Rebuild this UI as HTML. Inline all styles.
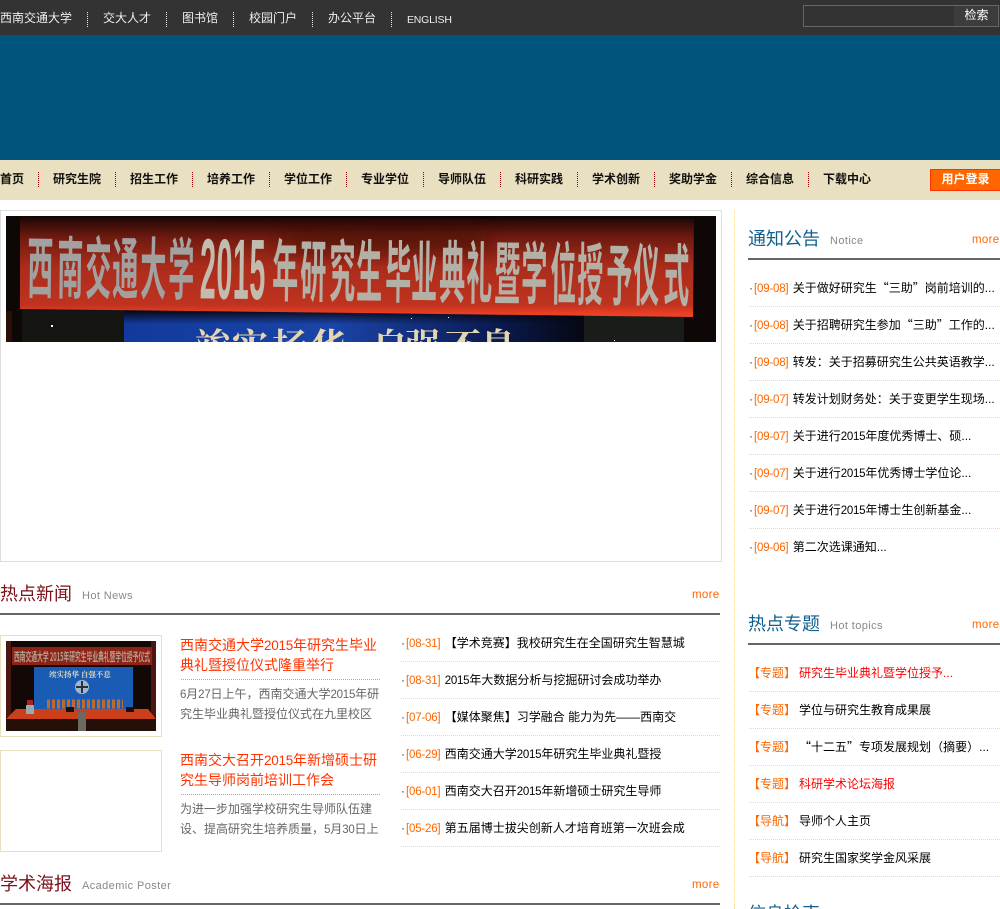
<!DOCTYPE html>
<html lang="zh"><head><meta charset="utf-8"><title>西南交通大学研究生院</title>
<style>
html,body{margin:0;padding:0;background:#fff}
#p{position:relative;width:1000px;height:909px;overflow:hidden;font:12px/18px "Liberation Sans","Noto Sans CJK SC",sans-serif;color:#000}
#p div{position:absolute;white-space:nowrap}
.t{color:#eee;top:9px}
.s{top:12px;height:15px;width:0;border-left:1px dotted #eee}
.n{top:170px;font-weight:bold;color:#111}
.m{top:172px;height:15px;width:0;border-left:1px dotted #900}
.h1{font-size:18px;line-height:24px}
.en{font-size:11px;color:#888;letter-spacing:.4px;line-height:16px}
.more{font-size:11.5px;color:#f60;letter-spacing:.3px}
.rule{height:2px;background:#666}
.d{height:0;border-top:1px dotted #e6dcb4}
.dg{height:0;border-top:1px dotted #aaa}
b{font-weight:normal;color:#f60;font-size:11.5px;letter-spacing:-.2px;margin-right:1px}
i{font-style:normal;display:inline-block;width:5px;color:#333}
em{font-style:normal;font-size:11.5px;letter-spacing:-.25px}
.ot em{font-size:13.5px}
.c{font-family:"Noto Sans CJK TC",sans-serif}
.q{font-family:"Noto Sans CJK SC",sans-serif}
.r{color:#f00}
.o{color:#f60}
.ot{font-size:14px;line-height:20px;color:#f30}
.gt{line-height:20px;color:#666;font-size:12px}
</style></head><body><div id="p">
<div style="left:0;top:0;width:1000px;height:35px;background:#333"></div>
<div style="left:0;top:35px;width:1000px;height:125px;background:#00557f"></div>
<div style="left:0;top:160px;width:1000px;height:40px;background:#e8e0c0"></div>

<div class="t" style="left:0">西南交通大学</div><div class="s" style="left:87px"></div>
<div class="t" style="left:103px">交大人才</div><div class="s" style="left:166px"></div>
<div class="t" style="left:182px">图书馆</div><div class="s" style="left:233px"></div>
<div class="t" style="left:249px">校园门户</div><div class="s" style="left:312px"></div>
<div class="t" style="left:328px">办公平台</div><div class="s" style="left:391px"></div>
<div class="t" style="left:407px;top:11px;font-size:10.5px;letter-spacing:-.2px">ENGLISH</div>

<div style="left:803px;top:5px;width:150px;height:20px;border:1px solid #666"></div>
<div style="left:954px;top:5px;width:44px;height:20px;border:1px solid #666;border-left:0;background:#3c3c3c;color:#fff;text-align:center;line-height:19px;text-indent:1px">检索</div>

<div class="n" style="left:0">首页</div><div class="m" style="left:38px"></div>
<div class="n" style="left:53px">研究生院</div><div class="m" style="left:115px"></div>
<div class="n" style="left:130px">招生工作</div><div class="m" style="left:192px"></div>
<div class="n" style="left:207px">培养工作</div><div class="m" style="left:269px"></div>
<div class="n" style="left:284px">学位工作</div><div class="m" style="left:346px"></div>
<div class="n" style="left:361px">专业学位</div><div class="m" style="left:423px"></div>
<div class="n" style="left:438px">导师队伍</div><div class="m" style="left:500px"></div>
<div class="n" style="left:515px">科研实践</div><div class="m" style="left:577px"></div>
<div class="n" style="left:592px">学术创新</div><div class="m" style="left:654px"></div>
<div class="n" style="left:669px">奖助学金</div><div class="m" style="left:731px"></div>
<div class="n" style="left:746px">综合信息</div><div class="m" style="left:808px"></div>
<div class="n" style="left:823px">下载中心</div>
<div style="left:930px;top:169px;width:69px;height:20px;background:#f60;border:1px solid #f30;border-right:0;color:#fff;font-weight:bold;text-align:center;line-height:19px">用户登录</div>

<!-- slide -->
<div style="left:0;top:210px;width:720px;height:350px;border:1px solid #ddd"></div>
<svg style="position:absolute;left:6px;top:216px" width="710" height="126" viewBox="0 0 710 126">
<defs>
<linearGradient id="g" x1="0" y1="0" x2="0" y2="1"><stop offset="0" stop-color="#1c0604"/><stop offset=".2" stop-color="#6e1a10"/><stop offset=".5" stop-color="#ab2c1b"/><stop offset=".88" stop-color="#bf3320"/><stop offset=".95" stop-color="#e63c22"/><stop offset="1" stop-color="#f0452a"/></linearGradient>
<linearGradient id="b" x1="0" y1="0" x2="1" y2="0"><stop offset="0" stop-color="#123a9c"/><stop offset=".45" stop-color="#1a44a8"/><stop offset=".8" stop-color="#0b1a50"/><stop offset="1" stop-color="#05060e"/></linearGradient>
<linearGradient id="sh" x1="0" y1="0" x2="0" y2="1"><stop offset="0" stop-color="#05060e"/><stop offset="1" stop-color="#05060e" stop-opacity="0"/></linearGradient>
<filter id="bl" x="-20%" y="-100%" width="140%" height="300%"><feGaussianBlur stdDeviation="9"/></filter>
</defs>
<rect width="710" height="126" fill="#0d0705"/>
<rect x="16" y="92" width="102" height="34" fill="#141410"/>
<rect x="118" y="94" width="466" height="32" fill="url(#b)"/>
<rect x="118" y="94" width="466" height="14" fill="url(#sh)"/>
<rect x="578" y="98" width="100" height="28" fill="#191c18"/>
<rect x="0" y="95" width="6" height="31" fill="#2a0f08"/>
<polygon points="14,1 688,3 687,101 14,93" fill="url(#g)"/>
<polygon points="280,16 480,14 480,38 280,36" fill="#3a0c06" opacity=".5" filter="url(#bl)"/>
<g font-family="Liberation Sans,Noto Sans CJK SC,sans-serif" font-weight="bold" font-size="26" fill="#a3a1a0">
<text transform="rotate(.7 0 76) translate(0 76) scale(1 2.6)" y="0" x="21 51 79 106 134 162">西南交通大学</text>
<text transform="rotate(.7 0 80) translate(0 80) scale(1.1 3.3)" y="0" x="176 191 206 221" fill="#c2bcae">2015</text>
<text transform="rotate(.7 0 76) translate(0 76) scale(1 2.6)" y="0" x="266 294 323 350 379 405 433 460 488 515 544 571 600 627 657" fill="#b4b0a6">年研究生毕业典礼暨学位授予仪式</text>
</g>
<text y="143" x="189 226 266 304 366 399 439 474" font-family="Liberation Serif,Noto Serif CJK SC,serif" font-weight="bold" font-size="36" fill="#e6d6b0">竢实扬华自强不息</text>
<rect x="45" y="109" width="2" height="2" fill="#fff"/><rect x="405" y="102" width="1" height="1" fill="#fff"/><rect x="442" y="101" width="1" height="1" fill="#fff"/><rect x="608" y="124" width="1" height="1" fill="#fff"/>
</svg>

<!-- hot news -->
<div class="h1" style="left:0;top:582px;color:#7d0f1a">热点新闻</div>
<div class="en" style="left:82px;top:588px">Hot News</div>
<div class="more" style="left:692px;top:586px">more</div>
<div class="rule" style="left:0;top:613px;width:720px"></div>

<div style="left:0;top:635px;width:160px;height:100px;border:1px solid #e8e0c0"></div>
<svg style="position:absolute;left:6px;top:641px" width="150" height="90" viewBox="0 0 150 90">
<rect width="150" height="90" fill="#120806"/>
<rect x="0" y="0" width="5" height="76" fill="#4a1810"/><rect x="145" y="0" width="5" height="76" fill="#4a1810"/>
<rect x="6" y="6" width="140" height="18" fill="#8e2216"/>
<text x="8" y="20" font-size="12" font-weight="bold" fill="#b0a090" textLength="136" lengthAdjust="spacingAndGlyphs" font-family="Noto Sans CJK SC,sans-serif">西南交通大学 2015年研究生毕业典礼暨学位授予仪式</text>
<rect x="28" y="26" width="99" height="43" fill="#1a5cb4"/>
<text x="43" y="36" font-size="7.5" font-weight="bold" fill="#e0d8c0" font-family="Noto Serif CJK SC,serif">竢实扬华 自强不息</text>
<circle cx="76" cy="46" r="7" fill="#9fb6cc"/><rect x="75" y="40" width="2" height="12" fill="#234"/><rect x="70" y="45" width="12" height="2" fill="#234"/>
<line x1="41" y1="63" x2="117" y2="63" stroke="#c06a30" stroke-width="9" stroke-dasharray="3 2"/>
<polygon points="10,68 142,68 150,78 0,78" fill="#cc3f1c"/>
<rect x="60" y="66" width="8" height="5" fill="#111"/><rect x="120" y="66" width="8" height="5" fill="#111"/>
<rect x="0" y="78" width="150" height="12" fill="#241008"/>
<rect x="20" y="64" width="8" height="9" fill="#9aa"/><rect x="21" y="59" width="6" height="5" fill="#a22"/>
<rect x="72" y="71" width="8" height="19" fill="#6a6a60"/>
</svg>
<div class="ot" style="left:180px;top:635px">西南交通大学<em>2015</em>年研究生毕业</div>
<div class="ot" style="left:180px;top:655px">典礼暨授位仪式隆重举行</div>
<div class="dg" style="left:181px;top:679px;width:199px"></div>
<div class="gt" style="left:180px;top:684px"><em>6</em>月<em>27</em>日上午<span class="c">，</span>西南交通大学<em>2015</em>年研</div>
<div class="gt" style="left:180px;top:704px">究生毕业典礼暨授位仪式在九里校区</div>

<div style="left:0;top:750px;width:160px;height:100px;border:1px solid #e8e0c0"></div>
<div class="ot" style="left:180px;top:750px">西南交大召开<em>2015</em>年新增硕士研</div>
<div class="ot" style="left:180px;top:770px">究生导师岗前培训工作会</div>
<div class="dg" style="left:181px;top:794px;width:199px"></div>
<div class="gt" style="left:180px;top:799px">为进一步加强学校研究生导师队伍建</div>
<div class="gt" style="left:180px;top:819px">设<span class="c">、</span>提高研究生培养质量<span class="c">，</span><em>5</em>月<em>30</em>日上</div>

<div style="left:401px;top:634px"><i>·</i><b>[08-31]</b> 【学术竞赛】我校研究生在全国研究生智慧城</div><div class="d" style="left:401px;top:661px;width:319px"></div>
<div style="left:401px;top:671px"><i>·</i><b>[08-31]</b> <em>2015</em>年大数据分析与挖掘研讨会成功举办</div><div class="d" style="left:401px;top:698px;width:319px"></div>
<div style="left:401px;top:708px"><i>·</i><b>[07-06]</b> 【媒体聚焦】习学融合 能力为先——西南交</div><div class="d" style="left:401px;top:735px;width:319px"></div>
<div style="left:401px;top:745px"><i>·</i><b>[06-29]</b> 西南交通大学<em>2015</em>年研究生毕业典礼暨授</div><div class="d" style="left:401px;top:772px;width:319px"></div>
<div style="left:401px;top:782px"><i>·</i><b>[06-01]</b> 西南交大召开<em>2015</em>年新增硕士研究生导师</div><div class="d" style="left:401px;top:809px;width:319px"></div>
<div style="left:401px;top:819px"><i>·</i><b>[05-26]</b> 第五届博士拔尖创新人才培育班第一次班会成</div><div class="d" style="left:401px;top:846px;width:319px"></div>

<div class="h1" style="left:0;top:872px;color:#7d0f1a">学术海报</div>
<div class="en" style="left:82px;top:878px">Academic Poster</div>
<div class="more" style="left:692px;top:876px">more</div>
<div class="rule" style="left:0;top:903px;width:720px"></div>

<!-- sidebar -->
<div style="left:734px;top:210px;height:699px;width:0;border-left:1px dotted #f0d8a0"></div>
<div class="h1" style="left:748px;top:227px;color:#11608f">通知公告</div>
<div class="en" style="left:830px;top:233px">Notice</div>
<div class="more" style="left:972px;top:231px">more</div>
<div class="rule" style="left:748px;top:258px;width:252px"></div>

<div style="left:749px;top:279px"><i>·</i><b>[09-08]</b> 关于做好研究生<span class="q">“</span>三助<span class="q">”</span>岗前培训的...</div><div class="d" style="left:749px;top:306px;width:251px"></div>
<div style="left:749px;top:316px"><i>·</i><b>[09-08]</b> 关于招聘研究生参加<span class="q">“</span>三助<span class="q">”</span>工作的...</div><div class="d" style="left:749px;top:343px;width:251px"></div>
<div style="left:749px;top:353px"><i>·</i><b>[09-08]</b> 转发<span class="c">：</span>关于招募研究生公共英语教学...</div><div class="d" style="left:749px;top:380px;width:251px"></div>
<div style="left:749px;top:390px"><i>·</i><b>[09-07]</b> 转发计划财务处<span class="c">：</span>关于变更学生现场...</div><div class="d" style="left:749px;top:417px;width:251px"></div>
<div style="left:749px;top:427px"><i>·</i><b>[09-07]</b> 关于进行<em>2015</em>年度优秀博士<span class="c">、</span>硕...</div><div class="d" style="left:749px;top:454px;width:251px"></div>
<div style="left:749px;top:464px"><i>·</i><b>[09-07]</b> 关于进行<em>2015</em>年优秀博士学位论...</div><div class="d" style="left:749px;top:491px;width:251px"></div>
<div style="left:749px;top:501px"><i>·</i><b>[09-07]</b> 关于进行<em>2015</em>年博士生创新基金...</div><div class="d" style="left:749px;top:528px;width:251px"></div>
<div style="left:749px;top:538px"><i>·</i><b>[09-06]</b> 第二次选课通知...</div>

<div class="h1" style="left:748px;top:612px;color:#11608f">热点专题</div>
<div class="en" style="left:830px;top:618px">Hot topics</div>
<div class="more" style="left:972px;top:616px">more</div>
<div class="rule" style="left:748px;top:643px;width:252px"></div>

<div class="o" style="left:748px;top:664px">【专题】</div><div class="r" style="left:799px;top:664px">研究生毕业典礼暨学位授予...</div><div class="d" style="left:749px;top:691px;width:251px"></div>
<div class="o" style="left:748px;top:701px">【专题】</div><div style="left:799px;top:701px">学位与研究生教育成果展</div><div class="d" style="left:749px;top:728px;width:251px"></div>
<div class="o" style="left:748px;top:738px">【专题】</div><div style="left:799px;top:738px"><span class="q">“</span>十二五<span class="q">”</span>专项发展规划<span class="c">（</span>摘要<span class="c">）</span>...</div><div class="d" style="left:749px;top:765px;width:251px"></div>
<div class="o" style="left:748px;top:775px">【专题】</div><div class="r" style="left:799px;top:775px">科研学术论坛海报</div><div class="d" style="left:749px;top:802px;width:251px"></div>
<div class="o" style="left:748px;top:812px">【导航】</div><div style="left:799px;top:812px">导师个人主页</div><div class="d" style="left:749px;top:839px;width:251px"></div>
<div class="o" style="left:748px;top:849px">【导航】</div><div style="left:799px;top:849px">研究生国家奖学金风采展</div><div class="d" style="left:749px;top:876px;width:251px"></div>

<div class="h1" style="left:748px;top:902px;color:#11608f">信息检索</div>
</div></body></html>
